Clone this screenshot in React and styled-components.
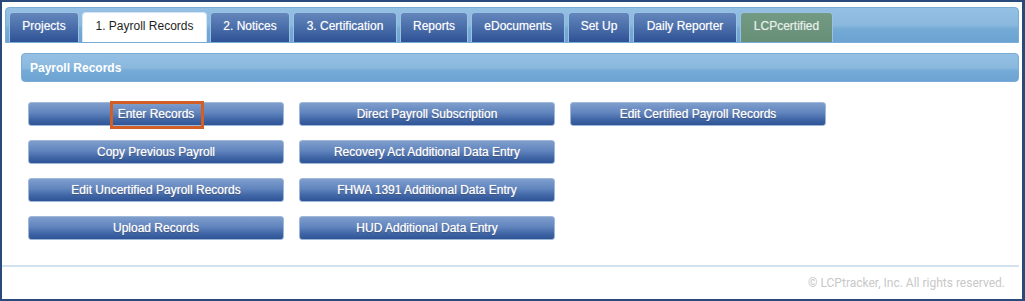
import styled, { createGlobalStyle } from "styled-components";

const GlobalStyle = createGlobalStyle`
  html, body {
    margin: 0;
    padding: 0;
    background: #ffffff;
  }
  body {
    font-family: "Liberation Sans", Arial, sans-serif;
  }
`;

const tabs = [
  { label: "Projects", width: 70 },
  { label: "1. Payroll Records", width: 125, active: true },
  { label: "2. Notices", width: 80 },
  { label: "3. Certification", width: 104 },
  { label: "Reports", width: 68 },
  { label: "eDocuments", width: 94 },
  { label: "Set Up", width: 62 },
  { label: "Daily Reporter", width: 104 },
  { label: "LCPcertified", width: 93, green: true },
];

const actions = [
  "Enter Records",
  "Direct Payroll Subscription",
  "Edit Certified Payroll Records",
  "Copy Previous Payroll",
  "Recovery Act Additional Data Entry",
  null,
  "Edit Uncertified Payroll Records",
  "FHWA 1391 Additional Data Entry",
  null,
  "Upload Records",
  "HUD Additional Data Entry",
  null,
];

const App = () => {
  return (
    <>
      <GlobalStyle />
      <Frame>
        <TabBar>
          {tabs.map((t) => (
            <Tab key={t.label} $width={t.width} $active={t.active} $green={t.green}>
              {t.label}
            </Tab>
          ))}
        </TabBar>
        <PanelHeader>Payroll Records</PanelHeader>
        <ButtonGrid>
          {actions.map((a, i) =>
            a ? (
              <ActionButton key={i}>
                {a}
                {a === "Enter Records" && <Highlight />}
              </ActionButton>
            ) : (
              <span key={i} />
            )
          )}
        </ButtonGrid>
        <Separator />
        <Footer>© LCPtracker, Inc. All rights reserved.</Footer>
      </Frame>
    </>
  );
};

const Frame = styled.div`
  width: 1025px;
  height: 301px;
  box-sizing: border-box;
  border: 2px solid #2a4a7c;
  border-right-width: 3px;
  background: #ffffff;
  display: flex;
  flex-direction: column;
`;

const TabBar = styled.div`
  height: 36px;
  box-sizing: border-box;
  margin: 5px 3px 0 3px;
  padding: 4px 3px 0 3px;
  display: flex;
  align-items: flex-end;
  gap: 3px;
  border: 1px solid #79acd6;
  border-radius: 4px 4px 0 0;
  background: linear-gradient(
    180deg,
    #93c0e3 0%,
    #8bb9de 50%,
    #74aad6 62%,
    #6ca3d2 100%
  );
`;

const Tab = styled.div`
  width: ${(p) => p.$width}px;
  height: 30px;
  box-sizing: border-box;
  padding-bottom: 3px;
  display: flex;
  align-items: center;
  justify-content: center;
  font-size: 12px;
  white-space: nowrap;
  border: 1px solid ${(p) => (p.$active ? "#d6e5f3" : "#9cc0e2")};
  border-bottom: none;
  border-radius: 4px 4px 0 0;
  color: ${(p) => (p.$active ? "#1f1f1f" : p.$green ? "#e6efe9" : "#ffffff")};
  background: ${(p) =>
    p.$active
      ? "#ffffff"
      : p.$green
      ? "linear-gradient(180deg, #739a82 0%, #678e77 100%)"
      : "linear-gradient(180deg, #6386bc 0%, #4a6ea9 50%, #2e5196 100%)"};
  text-shadow: ${(p) => (p.$active ? "none" : "0 0 1px rgba(255,255,255,0.5)")};
`;

const PanelHeader = styled.div`
  margin: 10px 3px 0 19px;
  height: 29px;
  box-sizing: border-box;
  padding-left: 8px;
  display: flex;
  align-items: center;
  font-size: 12px;
  font-weight: bold;
  color: #ffffff;
  border: 1px solid #79acd6;
  border-radius: 4px;
  background: linear-gradient(
    180deg,
    #93c0e3 0%,
    #8bb9de 50%,
    #74aad6 62%,
    #6ca3d2 100%
  );
`;

const ButtonGrid = styled.div`
  margin: 20px 0 0 26px;
  display: grid;
  grid-template-columns: repeat(3, 256px);
  grid-auto-rows: 24px;
  column-gap: 15px;
  row-gap: 14px;
`;

const ActionButton = styled.div`
  position: relative;
  box-sizing: border-box;
  display: flex;
  align-items: center;
  justify-content: center;
  font-size: 12px;
  color: #ffffff;
  white-space: nowrap;
  border: 1px solid #9fb7d8;
  border-radius: 3px;
  background: linear-gradient(
    180deg,
    #7f9ecd 0%,
    #6084bd 45%,
    #4166a6 75%,
    #2f5496 100%
  );
  text-shadow: 0 0 1px rgba(255, 255, 255, 0.7), 0 1px 1px rgba(0, 0, 0, 0.35);
`;

const Highlight = styled.span`
  position: absolute;
  left: 81px;
  top: -2px;
  width: 94px;
  height: 28px;
  box-sizing: border-box;
  border: 3px solid #d35f27;
`;

const Separator = styled.div`
  margin: 25px 3px 0 0;
  height: 2px;
  background: #d3e2f1;
`;

const Footer = styled.div`
  flex: 1;
  display: flex;
  align-items: center;
  justify-content: flex-end;
  padding-right: 17px;
  font-family: Roboto, "Liberation Sans", sans-serif;
  font-size: 12px;
  color: #c8c8c8;
`;

export default App;
